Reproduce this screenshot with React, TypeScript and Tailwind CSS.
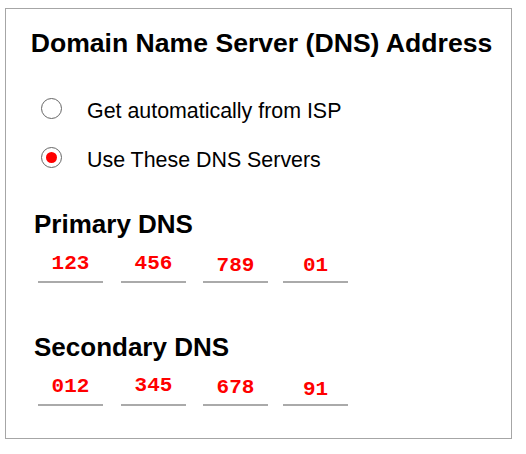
import React from "react";

const rows = [
  { label: "Primary DNS", values: ["123", "456", "789", "01"], shift: ["", "", "translate-y-[2px]", "translate-y-[2px]"] },
  { label: "Secondary DNS", values: ["012", "345", "678", "91"], shift: ["", "-translate-y-[1px]", "translate-y-[1px]", "translate-y-[3px]"] },
];

const fieldGaps = ["ml-0", "ml-[18px]", "ml-[17px]", "ml-[15px]"];

const Radio = ({ checked, label }: { checked?: boolean; label: string }) => (
  <div className="flex items-start">
    <span className="mt-[-1px] ml-[35px] flex h-[21px] w-[21px] items-center justify-center rounded-full border border-[#666] bg-white">
      {checked && <span className="h-[11px] w-[11px] rounded-full bg-[#ff0000]" />}
    </span>
    <span className="ml-[25px] text-[21.4px] leading-[24px] text-black">{label}</span>
  </div>
);

const DnsRow = ({ label, values, shift }: { label: string; values: string[]; shift: string[] }) => (
  <div className="flex flex-col">
    <h2 className="ml-[28px] text-[26px] font-bold leading-[29px] text-black">{label}</h2>
    <div className="mt-[13px] ml-[32px] flex">
      {values.map((v, i) => (
        <div
          key={i}
          className={`${fieldGaps[i]} w-[65px] border-b-2 border-[#aaaaaa] pb-[5px] text-center font-['Liberation_Mono',monospace] text-[21px] font-bold leading-[24px] text-[#ff0000]`}
        >
          <span className={`inline-block ${shift[i]}`}>{v}</span>
        </div>
      ))}
    </div>
  </div>
);

export default function App() {
  return (
    <div className="h-[454px] w-[526px] bg-white pt-[8px] pl-[5px] font-['Liberation_Sans',Arial,sans-serif]">
      <div className="flex h-[431px] w-[507px] flex-col border border-[#a6a6a6] pt-[19px]">
        <h1 className="pl-[6px] text-center text-[26.6px] font-bold leading-[30px] text-black">
          Domain Name Server (DNS) Address
        </h1>
        <div className="mt-[41px] flex flex-col gap-[25px]">
          <Radio label="Get automatically from ISP" />
          <Radio checked label="Use These DNS Servers" />
        </div>
        <div className="mt-[38px] flex flex-col gap-[50px]">
          {rows.map((r) => (
            <DnsRow key={r.label} label={r.label} values={r.values} shift={r.shift} />
          ))}
        </div>
      </div>
    </div>
  );
}
